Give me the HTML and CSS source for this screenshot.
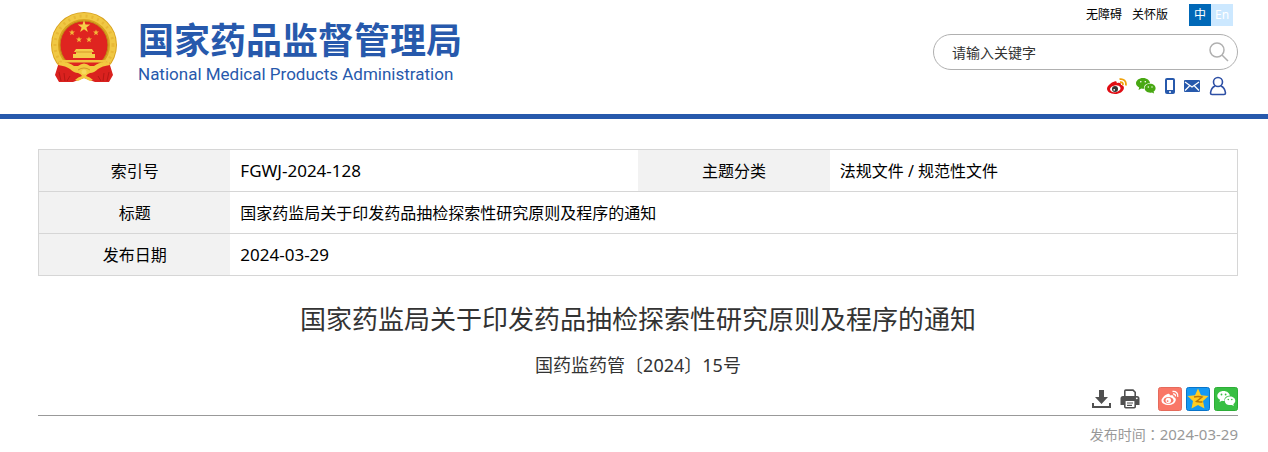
FILE: index.html
```html
<!DOCTYPE html>
<html lang="zh-CN">
<head>
    <meta charset="UTF-8">
    <meta name="viewport" content="width=device-width, initial-scale=1.0">
    <title>国家药监局关于印发药品抽检探索性研究原则及程序的通知</title>
    <link rel="stylesheet" href="styles.css">
</head>
<body>
    <header class="header">
        <a class="logo" href="#">
            <svg class="emblem" viewBox="0 0 68 72" width="68" height="72" aria-hidden="true">
                <circle cx="34" cy="33" r="33" fill="#d9a21f"/>
                <circle cx="34" cy="33" r="29" fill="none" stroke="#f0c844" stroke-width="6"/>
                <circle cx="34" cy="33" r="29" fill="none" stroke="#e8b836" stroke-width="3" stroke-dasharray="2 4"/>
                <circle cx="34" cy="33" r="24" fill="#df2420" stroke="#c08a18"/>
                <path d="M34 8l1.500 4.600h4.800l-3.900 2.800 1.500 4.600-3.900-2.800-3.900 2.800 1.500-4.600-3.900-2.800h4.800z" fill="#f6cf48"/>
                <path id="star" d="M22 17.500l.8 2.100h2.200l-1.800 1.400.7 2.200-1.900-1.300-1.900 1.300.7-2.200-1.800-1.400h2.200z" fill="#f2b93a"/>
                <use href="#star" x="24" y="0"/>
                <use href="#star" x="7" y="7"/>
                <use href="#star" x="17" y="7"/>
                <path d="M26 37h16l2 3h-2v2h3v4H23v-4h3v-2h-2z" fill="#f5cd4b"/>
                <path d="M26 40h16" stroke="#d79a28"/>
                <path d="M12 48h44l-1.500 2.500h-41z" fill="#f0c43e"/>
                <path d="M9 50l-4 13 4 7h14l11-4 11 4h14l4-7-4-13-12 3H21z" fill="#da211e"/>
                <path d="M9 60l2 9M14 61l1 8M20 64l-3 5M59 60l-2 9M54 61l-1 8M48 64l3 5" stroke="#b51815"/>
                <path d="M9 50q10 0 15 4h4q6-5 12 0h4q5-4 15-4l1 3q-8 1-12 4-4 4-8 4-3 1-4 3 4 1 7 4l-3 1-6-3-6 3-3-1q3-3 7-4-1-2-4-3-4 0-8-4-4-3-12-4z" fill="#f3c940"/>
                <path d="M28 58q6-4 12 0" fill="none" stroke="#d4962a"/>
                <circle cx="34" cy="60" r="2.500" fill="#f8d95c"/>
            </svg>
            <span class="logo-text">
                <span class="logo-cn">国家药品监督管理局</span>
                <span class="logo-en" lang="en">National Medical Products Administration</span>
            </span>
        </a>
        <div class="tools">
            <div class="top-links">
                <a href="#">无障碍</a>
                <a href="#">关怀版</a>
                <div class="lang">
                    <a class="lang-cn" href="#">中</a>
                    <a class="lang-en" href="#" lang="en">En</a>
                </div>
            </div>
            <form class="search">
                <input type="text" placeholder="请输入关键字" aria-label="请输入关键字">
                <button type="submit" aria-label="搜索">
                    <svg viewBox="0 0 20 20" width="20" height="20" fill="none" stroke="#b0b0b0" stroke-width="1.500">
                        <circle cx="8" cy="8" r="7"/>
                        <path d="M13 13l6 6"/>
                    </svg>
                </button>
            </form>
            <nav class="social">
                <a href="#" aria-label="微博">
                    <svg viewBox="0 0 20 16" width="20" height="16">
                        <path d="M7.500 3.500c1.500-.8 2.600-.1 2.200 1.700 2.500-1 4.800-.5 4.200 1.600 2 .6 3.300 1.700 3 3.400C16.400 13.600 12.500 16 8 16S0 13.800 0 10.800c0-2.800 4.200-6.500 7.500-7.300z" fill="#e00d14"/>
                        <ellipse cx="8.300" cy="10.800" rx="5.300" ry="3.400" fill="#fff" transform="rotate(-8 8 10.800)"/>
                        <circle cx="8" cy="11" r="3" fill="#333"/>
                        <circle cx="7.200" cy="11.800" r=".9" fill="#fff"/>
                        <path d="M12.500 1.200c4-.8 7.200 2 6.300 6.300M13 4.200c2-.3 3.300.8 2.800 2.800" fill="none" stroke="#f0a20c" stroke-width="1.800"/>
                    </svg>
                </a>
                <a href="#" aria-label="微信">
                    <svg viewBox="0 0 20 16" width="20" height="16">
                        <path d="M7 0c4 0 7 2.500 7 5.300-4 0-6.500 2.400-5.700 5.400-1 .1-2 .1-3-.2L2.500 12l.7-2.500C1 8.500 0 7 0 5.300 0 2.500 3 0 7 0z" fill="#48a813"/>
                        <path d="M14 5.800c3.400 0 5.600 2 5.600 4.400 0 1.500-.8 2.600-2 3.400l.5 2-2.200-1.100c-4 .8-7.200-1.300-7.200-4.200 0-2.500 2.200-4.500 5.300-4.500z" fill="#48a813"/>
                        <circle cx="4.800" cy="3.700" r=".8" fill="#fff"/>
                        <circle cx="9.300" cy="3.700" r=".8" fill="#fff"/>
                        <circle cx="12.300" cy="9" r=".7" fill="#fff"/>
                        <circle cx="16" cy="9" r=".7" fill="#fff"/>
                    </svg>
                </a>
                <a href="#" aria-label="手机">
                    <svg viewBox="0 0 10 16" width="10" height="16">
                        <rect width="10" height="16" rx="2" fill="#2759ac"/>
                        <path d="M2 2h6v10H2z" fill="#fff"/>
                        <circle cx="5" cy="14" r="1" fill="#fff"/>
                    </svg>
                </a>
                <a href="#" aria-label="邮箱">
                    <svg viewBox="0 0 16 12" width="16" height="12">
                        <rect width="16" height="12" rx="1" fill="#2759ac"/>
                        <path d="M1 2l7 5 7-5M1 10.500l4.500-4.500M15 10.500L10.500 6" fill="none" stroke="#fff" stroke-width="1.300"/>
                    </svg>
                </a>
                <a class="user" href="#" aria-label="用户">
                    <svg viewBox="0 0 18 20" width="18" height="20" fill="none" stroke="#2d4fa5" stroke-width="1.600">
                        <circle cx="9" cy="6" r="4.500"/>
                        <path d="M6 10C3.500 11 2 13.500 1.500 17c0 1 .5 1.500 1.500 1.500h12c1 0 1.500-.5 1.500-1.500-.5-3.500-2-6-4.500-7"/>
                    </svg>
                </a>
            </nav>
        </div>
    </header>

    <main class="content">
        <table class="info">
            <tr>
                <th scope="row">索引号</th>
                <td class="number">FGWJ-2024-128</td>
                <th scope="row">主题分类</th>
                <td>法规文件 / 规范性文件</td>
            </tr>
            <tr>
                <th scope="row">标题</th>
                <td colspan="3">国家药监局关于印发药品抽检探索性研究原则及程序的通知</td>
            </tr>
            <tr>
                <th scope="row">发布日期</th>
                <td class="number" colspan="3">2024-03-29</td>
            </tr>
        </table>

        <h1 class="title">国家药监局关于印发药品抽检探索性研究原则及程序的通知</h1>
        <p class="doc-no">国药监药管〔2024〕15号</p>

        <div class="actions">
            <button type="button" aria-label="下载">
                <svg viewBox="0 0 20 20" width="20" height="20">
                    <path d="M7 1h5v7h4l-6.500 7L3 8h4z" fill="#505050"/>
                    <path d="M1 14v4h17v-4" fill="none" stroke="#505050" stroke-width="2"/>
                </svg>
            </button>
            <button type="button" aria-label="打印">
                <svg viewBox="0 0 20 20" width="20" height="20">
                    <path d="M4.800 7V2q0-.9.9-.9h7.300l2.200 2.200V7" fill="none" stroke="#505050" stroke-width="1.600"/>
                    <path d="M3 7h14q2.500 0 2.500 2.500V16h-4v-4h-11v4h-4V9.500Q.5 7 3 7z" fill="#505050"/>
                    <rect x="4.800" y="11.300" width="10.400" height="7.400" rx="1" fill="#fff" stroke="#505050" stroke-width="1.600"/>
                    <path d="M7 14h6M7 16.300h5" stroke="#505050" stroke-width="1.200"/>
                    <circle cx="16.800" cy="9.300" r=".9" fill="#fff"/>
                </svg>
            </button>
            <div class="share">
                <a href="#" aria-label="分享到微博">
                    <svg viewBox="0 0 24 24" width="24" height="24">
                        <rect x=".5" y=".5" width="23" height="23" rx="2" fill="#f97767" stroke="#e56a5b"/>
                        <path d="M9.500 7c1.500-.8 2.600 0 2.300 1.500 2.200-.8 4.200-.3 3.700 1.400 1.700.6 2.500 1.700 2.300 3.100-.4 3-3.500 5-7.300 5S3.500 16.300 3.500 13.500c0-2.300 3.500-5.600 6-6.500z" fill="#fff"/>
                        <ellipse cx="10.500" cy="13.400" rx="5" ry="3.300" fill="#f97767"/>
                        <circle cx="10.300" cy="13.500" r="2.700" fill="#fff"/>
                        <circle cx="9.600" cy="14.100" r=".9" fill="#f97767"/>
                        <path d="M14.500 4.500c3.500-.6 6 2 5.200 5.300M15 7c1.700-.2 2.700.8 2.400 2.400" fill="none" stroke="#fff" stroke-width="1.300"/>
                    </svg>
                </a>
                <a href="#" aria-label="分享到QQ空间">
                    <svg viewBox="0 0 24 24" width="24" height="24">
                        <rect x=".5" y=".5" width="23" height="23" rx="2" fill="#1598f2" stroke="#0874c9"/>
                        <path d="M12 1.500l3 6.700 7.500.8-5.500 5 1.500 7.500L12 18l-6.500 3.500L7 14 1.500 9 9 8.200z" fill="#ffcd22"/>
                        <path d="M8 10q4-1 8 0l-5.500 4.500q3 .8 6 .2" fill="none" stroke="#b87809" stroke-width="1.400"/>
                    </svg>
                </a>
                <a href="#" aria-label="分享到微信">
                    <svg viewBox="0 0 24 24" width="24" height="24">
                        <rect x=".5" y=".5" width="23" height="23" rx="2" fill="#38bf43" stroke="#2dad37"/>
                        <path d="M9.500 4c3.600 0 6.300 2.200 6.300 4.800-3.500 0-6 2.200-5.200 5.100-1 .1-1.700 0-2.600-.2l-2.500 1.400.6-2.300C4.200 11.900 3.300 10.500 3.300 9c0-2.800 2.700-5 6.200-5z" fill="#fff"/>
                        <path d="M16 9.500c3 0 5.300 1.900 5.300 4.200 0 1.400-.8 2.500-2 3.300l.5 2-2-1.100c-3.900.9-7-1.200-7-4.200 0-2.300 2.200-4.200 5.200-4.200z" fill="#fff"/>
                        <circle cx="7.500" cy="7.500" r=".9" fill="#38bf43"/>
                        <circle cx="11.600" cy="7.500" r=".9" fill="#38bf43"/>
                        <circle cx="14.300" cy="12.500" r=".8" fill="#38bf43"/>
                        <circle cx="17.800" cy="12.500" r=".8" fill="#38bf43"/>
                    </svg>
                </a>
            </div>
        </div>
        <p class="publish">发布时间<span class="colon" lang="zh-TW">：</span><time datetime="2024-03-29">2024-03-29</time></p>
    </main>
</body>
</html>
```

FILE: styles.css
```css
* {
  box-sizing: border-box;
}

body {
  margin: 0;
  background-color: #ffffff;
  color: #000000;
  font-family: "Noto Sans", "Noto Sans CJK SC", sans-serif;
  font-size: 16px;
}

a {
  color: inherit;
  text-decoration: none;
}

svg {
  display: block;
}

button {
  padding: 0;
  border: none;
  background: none;
  cursor: pointer;
}

/* Header */
.header {
  display: flex;
  justify-content: space-between;
  align-items: flex-start;
  height: 119px;
  padding: 0 30px 0 50px;
  border-bottom: 5px solid #2759ac;
}

.logo {
  display: flex;
  gap: 20px;
  padding-top: 12px;
  color: #2759ac;
}

.logo-text {
  display: flex;
  flex-direction: column;
  padding-top: 4px;
}

.logo-cn {
  font-family: "Noto Sans CJK SC", sans-serif;
  font-size: 36px;
  font-weight: bold;
  line-height: 44px;
}

.logo-en {
  font-family: Roboto, Arial, sans-serif;
  font-size: 17px;
  line-height: 28px;
}

.tools {
  width: 305px;
}

.top-links {
  display: flex;
  justify-content: flex-end;
  gap: 10px;
  padding: 4px 5px 8px 0;
  font-size: 12px;
  line-height: 22px;
}

.lang {
  display: flex;
  margin-left: 11px;
  color: #ffffff;
  text-align: center;
}

.lang a {
  width: 22px;
}

.lang-cn {
  background-color: #0068b7;
}

.lang-en {
  background-color: #cce8ff;
}

.search {
  display: flex;
  align-items: center;
  height: 36px;
  padding: 0 8px 0 18px;
  border: 1px solid #b0b0b0;
  border-radius: 18px;
}

.search input {
  flex: 1;
  min-width: 0;
  padding: 0;
  border: none;
  outline: none;
  background: none;
  font-family: inherit;
  font-size: 14px;
}

.search input::placeholder {
  color: #333333;
}

.social {
  display: flex;
  justify-content: flex-end;
  align-items: center;
  gap: 9px;
  padding: 6px 11px 0 0;
}

/* Document info */
.content {
  padding: 30px 30px 0 38px;
}

.info {
  width: 100%;
  border-collapse: collapse;
  border: 1px solid #d6d6d6;
  table-layout: fixed;
}

.info tr {
  height: 42px;
  border-bottom: 1px solid #d6d6d6;
}

.info th {
  width: 16%;
  padding: 0;
  background-color: #f2f2f2;
  font-weight: normal;
}

.info td {
  padding: 0 10px;
}

.info th,
.info td {
  line-height: 24px;
}

.info .number {
  font-size: 17px;
}

/* Article */
.title {
  margin: 23px 0 0;
  color: #333333;
  font-size: 26px;
  font-weight: normal;
  line-height: 40px;
  text-align: center;
}

.doc-no {
  margin: 12px 0 8px;
  color: #333333;
  font-size: 18px;
  line-height: 28px;
  text-align: center;
}

.actions {
  display: flex;
  justify-content: flex-end;
  align-items: center;
  gap: 8px;
  padding-bottom: 4px;
  border-bottom: 1px solid #999999;
}

.share {
  display: flex;
  gap: 4px;
  margin-left: 10px;
}

.publish {
  margin: 6px 0 0;
  color: #999999;
  font-size: 14px;
  line-height: 24px;
  text-align: right;
}

/* the TC face centres the full-width colon */
.colon {
  font-family: "Noto Sans CJK TC", sans-serif;
}

.publish time {
  font-size: 15px;
}
```
